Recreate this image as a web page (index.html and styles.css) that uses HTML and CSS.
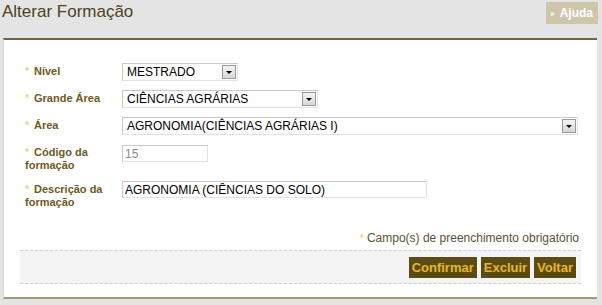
FILE: index.html
```html
<!DOCTYPE html>
<html lang="pt-BR">
<head>
  <meta charset="UTF-8" />
  <title>Alterar Formação</title>
  <link rel="stylesheet" href="styles.css">
</head>
<body>
  <header class="topbar">
    <h1>Alterar Formação</h1>
    <a class="help-btn" href="#"><span class="arrow">&#9656;</span>Ajuda</a>
  </header>

  <div class="panel">
    <form class="form">
      <!-- Nível -->
      <div class="row">
        <label class="label"><span class="req">*</span>Nível</label>
        <div class="select w-nivel"><span class="value">MESTRADO</span><span class="drop"></span></div>
      </div>

      <div class="row">
        <label class="label"><span class="req">*</span>Grande Área</label>
        <div class="select w-grande"><span class="value">CIÊNCIAS AGRÁRIAS</span><span class="drop"></span></div>
      </div>

      <div class="row">
        <label class="label"><span class="req">*</span>Área</label>
        <div class="select w-area"><span class="value">AGRONOMIA(CIÊNCIAS AGRÁRIAS I)</span><span class="drop"></span></div>
      </div>

      <div class="row">
        <label class="label"><span class="req">*</span>Código da<br>formação</label>
        <input class="field field-code" type="text" value="15" readonly />
      </div>

      <div class="row">
        <label class="label"><span class="req">*</span>Descrição da<br>formação</label>
        <input class="field field-desc" type="text" value="AGRONOMIA (CIÊNCIAS DO SOLO)" />
      </div>
    </form>

    <p class="note"><span class="note-req">*</span> Campo(s) de preenchimento obrigatório</p>

    <div class="actions">
      <button class="btn">Confirmar</button>
      <button class="btn">Excluir</button>
      <button class="btn">Voltar</button>
    </div>
  </div>
</body>
</html>
```

FILE: styles.css
```css
* {
  box-sizing: border-box;
}

body {
  margin: 0;
  padding: 0;
  background: #e4e4e4;
  font-family: "Liberation Sans", Arial, sans-serif;
  width: 602px;
  height: 305px;
  overflow: hidden;
}

.topbar {
  display: flex;
  justify-content: space-between;
  align-items: flex-start;
  height: 38px;
  padding: 2px 4px 0 2px;
}

.topbar h1 {
  margin: 0;
  font-size: 17px;
  font-weight: normal;
  color: #4d4222;
  line-height: 20px;
}

.help-btn {
  display: flex;
  align-items: center;
  height: 22px;
  padding: 0 5px;
  background: #cdc6ab;
  color: #fff;
  font-size: 12px;
  font-weight: bold;
  text-decoration: none;
}

.help-btn .arrow {
  font-size: 8px;
  margin-right: 5px;
  color: #f4f0e0;
}

.panel {
  margin: 0 5px 0 3px;
  height: 261px;
  background: #fff;
  border-top: 2px solid #6f6440;
  border-bottom: 2px solid #a39a78;
  border-left: 1px solid #d8d8d8;
  padding: 23px 16px 0 16px;
}

.form {
  display: flex;
  flex-direction: column;
  gap: 9px;
  padding-left: 5px;
}

.row {
  display: flex;
  align-items: flex-start;
  min-height: 18px;
}

.label {
  width: 97px;
  font-size: 11px;
  font-weight: bold;
  line-height: 13px;
  color: #6d5a22;
  padding-top: 2px;
}

.req {
  display: inline-block;
  width: 9px;
  color: #eec65a;
  font-weight: normal;
}

.select {
  display: flex;
  align-items: center;
  justify-content: space-between;
  height: 18px;
  border: 1px solid #c9c9c9;
  border-right-color: #e2e2e2;
  border-bottom-color: #e2e2e2;
  background: #fff;
  padding: 0 1px 0 4px;
  font-size: 12px;
  color: #000;
}

.w-nivel { width: 116px; }
.w-grande { width: 196px; }
.w-area { width: 456px; }

.drop {
  width: 14px;
  height: 14px;
  border: 1px solid #9a9a9a;
  background: linear-gradient(#f4f4f4, #d6d6d6);
  position: relative;
}

.drop::after {
  content: "";
  position: absolute;
  left: 3px;
  top: 5px;
  border-left: 3px solid transparent;
  border-right: 3px solid transparent;
  border-top: 3px solid #000;
}

.field {
  height: 17px;
  margin: 1px 0 0 0;
  border: 1px solid #c9c9c9;
  border-right-color: #e2e2e2;
  border-bottom-color: #e2e2e2;
  padding: 0 2px;
  font-family: "Liberation Sans", Arial, sans-serif;
  font-size: 12px;
  color: #000;
  outline: none;
}

.field-code {
  width: 86px;
  color: #8a8a8a;
}

.field-desc {
  width: 305px;
  margin-top: 0;
}

.note {
  margin: 22px 2px 0 0;
  text-align: right;
  font-size: 12px;
  line-height: 14px;
  color: #5c5230;
}

.note-req {
  color: #eec65a;
  font-size: 10px;
}

.actions {
  display: flex;
  justify-content: flex-end;
  gap: 4px;
  margin-top: 4px;
  height: 34px;
  padding: 6px 5px 0 0;
  background: #f4f4f4;
  border-top: 1px dashed #cfcfcf;
  border-bottom: 1px dashed #cfcfcf;
}

.btn {
  height: 21px;
  padding: 0 3px;
  border: none;
  background: #5c4b12;
  color: #e6b82a;
  font-family: "Liberation Sans", Arial, sans-serif;
  font-size: 13px;
  font-weight: bold;
  cursor: pointer;
}
```
